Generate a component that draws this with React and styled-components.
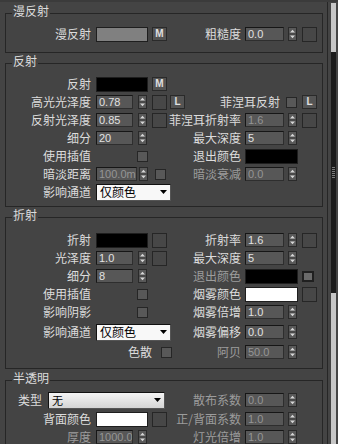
import React from 'react';
import styled, { createGlobalStyle } from 'styled-components';

const GlobalStyle = createGlobalStyle`
    html, body {
        margin: 0;
        padding: 0;
        background: #444444;
    }
    body {
        font-family: "Noto Sans CJK SC", "Noto Sans", sans-serif;
    }
`;

const Screen = styled.div`
    display: flex;
    width: 338px;
    height: 444px;
    box-sizing: border-box;
    overflow: hidden;
    background: #444444;
    border-top: 2px solid #3b3b3b;
`;

const Panel = styled.div`
    width: 328px;
    flex: none;
    box-sizing: border-box;
    padding: 2px 4px 0 5px;
    border-right: 1px solid #262626;
`;

const ScrollBar = styled.div`
    width: 5px;
    flex: none;
    margin-left: 3px;
    padding-top: 1px;
    display: flex;
    flex-direction: column;
`;

const Track = styled.div`
    background: #c6c6c6;
    height: ${p => p.$h || 0}px;
    flex: ${p => (p.$grow ? 1 : 'none')};
`;

const Thumb = styled.div`
    height: 241px;
    background: #1c1c1c;
    display: flex;
    align-items: center;
    justify-content: center;
`;

const Grip = styled.div`
    width: 3px;
    height: 12px;
    background: repeating-linear-gradient(to bottom, #7a7a7a 0 1px, transparent 1px 2px);
`;

const Group = styled.fieldset`
    margin: 0 0 ${p => p.$mb || 0}px;
    padding: ${p => p.$pt}px 0 ${p => p.$pb}px;
    border: 1px solid #262626;
    min-width: 0;
`;

const Legend = styled.legend`
    margin-left: 6px;
    padding: 0 1px 4px;
    font-size: 12px;
    line-height: 14px;
    color: #dcdcdc;
`;

const Rows = styled.div`
    display: grid;
    grid-template-columns: 164px 1fr;
    grid-template-rows: ${p => p.$rows || 'none'};
    grid-auto-rows: 18px;
`;

const Field = styled.div`
    display: grid;
    grid-template-columns: ${p => p.$lw || (p.$side === 'right' ? 71 : 85)}px max-content;
    column-gap: ${p => p.$gap || (p.$side === 'right' ? 4 : 5)}px;
    align-items: center;
    min-width: 0;
`;

const Blank = styled.div``;

const Label = styled.span`
    display: flex;
    justify-content: flex-end;
    white-space: nowrap;
    font-size: 12px;
    line-height: 14px;
    color: ${p => (p.$dim ? '#9c9c9c' : '#dcdcdc')};
`;

const Controls = styled.div`
    display: flex;
    align-items: center;
    gap: ${p => p.$gap || 4}px;
`;

const NumInput = styled.div`
    width: ${p => p.$w}px;
    height: 14px;
    box-sizing: border-box;
    padding-left: 2px;
    background: #575757;
    border: 1px solid #2e2e2e;
    border-top-color: #161616;
    border-left-color: #161616;
    color: ${p => (p.$dim ? '#959595' : '#e2e2e2')};
    font: 11px/12px "Liberation Sans", sans-serif;
    overflow: hidden;
    white-space: nowrap;
`;

const ArrowBox = styled.div`
    width: 9px;
    height: 14px;
    box-sizing: border-box;
    background: #595959;
    border: 1px solid #2a2a2a;
    display: flex;
`;

const Slot = styled.div`
    width: 15px;
    height: 15px;
    box-sizing: border-box;
    border: 1px solid #262626;
    background: #474747;
    margin-left: ${p => p.$ml || 0}px;
`;

const Check = styled.div`
    width: ${p => (p.$boxed ? 12 : 11)}px;
    height: 11px;
    box-sizing: border-box;
    border: ${p => (p.$boxed ? '2px solid #202020' : '1px solid #262626')};
    background: ${p => (p.$boxed ? '#6a6a6a' : '#585858')};
    margin-left: ${p => p.$ml || 0}px;
`;

const Swatch = styled.div`
    width: ${p => p.$w}px;
    height: 15px;
    box-sizing: border-box;
    background: ${p => p.$color};
    border: 1px solid #1e1e1e;
`;

const Btn = styled.div`
    width: 15px;
    height: 14px;
    box-sizing: border-box;
    display: flex;
    align-items: center;
    justify-content: center;
    background: #545454;
    border: 1px solid #2a2a2a;
    color: #e0e0e0;
    font: bold 10px/1 "Liberation Sans", sans-serif;
    margin-left: ${p => p.$ml || 0}px;
`;

const Select = styled.div`
    width: ${p => p.$w}px;
    height: 17px;
    box-sizing: border-box;
    display: flex;
    align-items: center;
    justify-content: space-between;
    padding: 0 3px 0 3px;
    background: ${p => (p.$soft ? 'linear-gradient(#f4f4f4, #d4d4d4)' : '#f8f8f8')};
    border: 1px solid #111;
    border-right-color: #555;
    border-bottom-color: #555;
    color: #000;
    font-size: ${p => (p.$soft ? 11 : 12)}px;
    line-height: 14px;
`;

function Arrows() {
    return (
        <ArrowBox>
            <svg width="7" height="12" viewBox="0 0 7 12">
                <path d="M1 4.5 L3.5 1.8 L6 4.5Z M1 7.5 L3.5 10.2 L6 7.5Z" fill="#d6d6d6" />
                <line x1="0" y1="6" x2="7" y2="6" stroke="#3a3a3a" strokeWidth="1" />
            </svg>
        </ArrowBox>
    );
}

function Caret() {
    return (
        <svg width="7" height="4" viewBox="0 0 7 4">
            <path d="M0 0 H7 L3.5 4Z" fill="#000" />
        </svg>
    );
}

function App() {
    return (
        <Screen>
            <GlobalStyle />
            <Panel>
                {/* 漫反射 */}
                <Group $pt={3} $pb={9} $mb={1}>
                    <Legend>漫反射</Legend>
                    <Rows>
                        <Field $side='left'>
                            <Label>漫反射</Label>
                            <Controls>
                                <Swatch $w={52} $color='#808080' />
                                <Btn>M</Btn>
                            </Controls>
                        </Field>
                        <Field $side='right'>
                            <Label>粗糙度</Label>
                            <Controls>
                                <NumInput $w={39}>0.0</NumInput>
                                <Arrows />
                                <Slot $ml={1} />
                            </Controls>
                        </Field>
                    </Rows>
                </Group>

                {/* 反射 */}
                <Group $pt={3} $pb={5} $mb={1}>
                    <Legend>反射</Legend>
                    <Rows>
                        <Field $side='left'>
                            <Label>反射</Label>
                            <Controls>
                                <Swatch $w={52} $color='#000' />
                                <Btn>M</Btn>
                            </Controls>
                        </Field>
                        <Blank />

                        <Field $side='left'>
                            <Label>高光光泽度</Label>
                            <Controls $gap={5}>
                                <NumInput $w={37}>0.78</NumInput>
                                <Arrows />
                                <Slot />
                                <Btn $ml={-2}>L</Btn>
                            </Controls>
                        </Field>
                        <Field $side='right' $lw={110} $gap={6}>
                            <Label>菲涅耳反射</Label>
                            <Controls $gap={5}>
                                <Check />
                                <Btn>L</Btn>
                            </Controls>
                        </Field>

                        <Field $side='left'>
                            <Label>反射光泽度</Label>
                            <Controls $gap={5}>
                                <NumInput $w={37}>0.85</NumInput>
                                <Arrows />
                                <Slot />
                            </Controls>
                        </Field>
                        <Field $side='right'>
                            <Label>菲涅耳折射率</Label>
                            <Controls>
                                <NumInput $w={39} $dim>1.6</NumInput>
                                <Arrows />
                                <Slot $ml={1} />
                            </Controls>
                        </Field>

                        <Field $side='left'>
                            <Label>细分</Label>
                            <Controls $gap={5}>
                                <NumInput $w={37}>20</NumInput>
                                <Arrows />
                            </Controls>
                        </Field>
                        <Field $side='right'>
                            <Label>最大深度</Label>
                            <Controls>
                                <NumInput $w={39}>5</NumInput>
                                <Arrows />
                            </Controls>
                        </Field>

                        <Field $side='left'>
                            <Label>使用插值</Label>
                            <Controls>
                                <Check $ml={41} />
                            </Controls>
                        </Field>
                        <Field $side='right'>
                            <Label>退出颜色</Label>
                            <Controls>
                                <Swatch $w={53} $color='#000' />
                            </Controls>
                        </Field>

                        <Field $side='left'>
                            <Label>暗淡距离</Label>
                            <Controls $gap={2}>
                                <NumInput $w={41} $dim>100.0m</NumInput>
                                <Arrows />
                                <Check $ml={5} />
                            </Controls>
                        </Field>
                        <Field $side='right'>
                            <Label $dim>暗淡衰减</Label>
                            <Controls>
                                <NumInput $w={39} $dim>0.0</NumInput>
                                <Arrows />
                            </Controls>
                        </Field>

                        <Field $side='left'>
                            <Label>影响通道</Label>
                            <Select $w={75}>
                                仅颜色
                                <Caret />
                            </Select>
                        </Field>
                        <Blank />
                    </Rows>
                </Group>

                {/* 折射 */}
                <Group $pt={5} $pb={7} $mb={2}>
                    <Legend>折射</Legend>
                    <Rows $rows='repeat(5, 18px) 22px 18px'>
                        <Field $side='left'>
                            <Label>折射</Label>
                            <Controls>
                                <Swatch $w={52} $color='#000' />
                                <Slot />
                            </Controls>
                        </Field>
                        <Field $side='right'>
                            <Label>折射率</Label>
                            <Controls>
                                <NumInput $w={39}>1.6</NumInput>
                                <Arrows />
                                <Slot $ml={1} />
                            </Controls>
                        </Field>

                        <Field $side='left'>
                            <Label>光泽度</Label>
                            <Controls $gap={5}>
                                <NumInput $w={37}>1.0</NumInput>
                                <Arrows />
                                <Slot />
                            </Controls>
                        </Field>
                        <Field $side='right'>
                            <Label>最大深度</Label>
                            <Controls>
                                <NumInput $w={39}>5</NumInput>
                                <Arrows />
                            </Controls>
                        </Field>

                        <Field $side='left'>
                            <Label>细分</Label>
                            <Controls $gap={5}>
                                <NumInput $w={37}>8</NumInput>
                                <Arrows />
                            </Controls>
                        </Field>
                        <Field $side='right'>
                            <Label $dim>退出颜色</Label>
                            <Controls>
                                <Swatch $w={53} $color='#000' />
                                <Check $boxed />
                            </Controls>
                        </Field>

                        <Field $side='left'>
                            <Label>使用插值</Label>
                            <Controls>
                                <Check $ml={41} />
                            </Controls>
                        </Field>
                        <Field $side='right'>
                            <Label>烟雾颜色</Label>
                            <Controls>
                                <Swatch $w={53} $color='#fff' />
                                <Slot />
                            </Controls>
                        </Field>

                        <Field $side='left'>
                            <Label>影响阴影</Label>
                            <Controls>
                                <Check $ml={41} />
                            </Controls>
                        </Field>
                        <Field $side='right'>
                            <Label>烟雾倍增</Label>
                            <Controls>
                                <NumInput $w={39}>1.0</NumInput>
                                <Arrows />
                            </Controls>
                        </Field>

                        <Field $side='left'>
                            <Label>影响通道</Label>
                            <Select $w={75}>
                                仅颜色
                                <Caret />
                            </Select>
                        </Field>
                        <Field $side='right'>
                            <Label>烟雾偏移</Label>
                            <Controls>
                                <NumInput $w={39}>0.0</NumInput>
                                <Arrows />
                            </Controls>
                        </Field>

                        <Field $side='left' $lw={146} $gap={9}>
                            <Label>色散</Label>
                            <Check />
                        </Field>
                        <Field $side='right'>
                            <Label $dim>阿贝</Label>
                            <Controls>
                                <NumInput $w={39} $dim>50.0</NumInput>
                                <Arrows />
                            </Controls>
                        </Field>
                    </Rows>
                </Group>

                {/* 半透明 */}
                <Group $pt={1} $pb={8}>
                    <Legend>半透明</Legend>
                    <Rows $rows='20px 18px 18px'>
                        <Field $side='left' $lw={36} $gap={6}>
                            <Label>类型</Label>
                            <Select $w={117} $soft>
                                无
                                <Caret />
                            </Select>
                        </Field>
                        <Field $side='right'>
                            <Label $dim>散布系数</Label>
                            <Controls>
                                <NumInput $w={39} $dim>0.0</NumInput>
                                <Arrows />
                            </Controls>
                        </Field>

                        <Field $side='left'>
                            <Label>背面颜色</Label>
                            <Controls>
                                <Swatch $w={52} $color='#fff' />
                                <Slot />
                            </Controls>
                        </Field>
                        <Field $side='right'>
                            <Label $dim>正/背面系数</Label>
                            <Controls>
                                <NumInput $w={39} $dim>1.0</NumInput>
                                <Arrows />
                            </Controls>
                        </Field>

                        <Field $side='left'>
                            <Label $dim>厚度</Label>
                            <Controls $gap={5}>
                                <NumInput $w={37} $dim>1000.0</NumInput>
                                <Arrows />
                            </Controls>
                        </Field>
                        <Field $side='right'>
                            <Label $dim>灯光倍增</Label>
                            <Controls>
                                <NumInput $w={39} $dim>1.0</NumInput>
                                <Arrows />
                            </Controls>
                        </Field>
                    </Rows>
                </Group>
            </Panel>

            {/* scroll bar */}
            <ScrollBar>
                <Track $h={49} />
                <Thumb>
                    <Grip />
                </Thumb>
                <Track $grow />
            </ScrollBar>
        </Screen>
    );
}

export default App;
